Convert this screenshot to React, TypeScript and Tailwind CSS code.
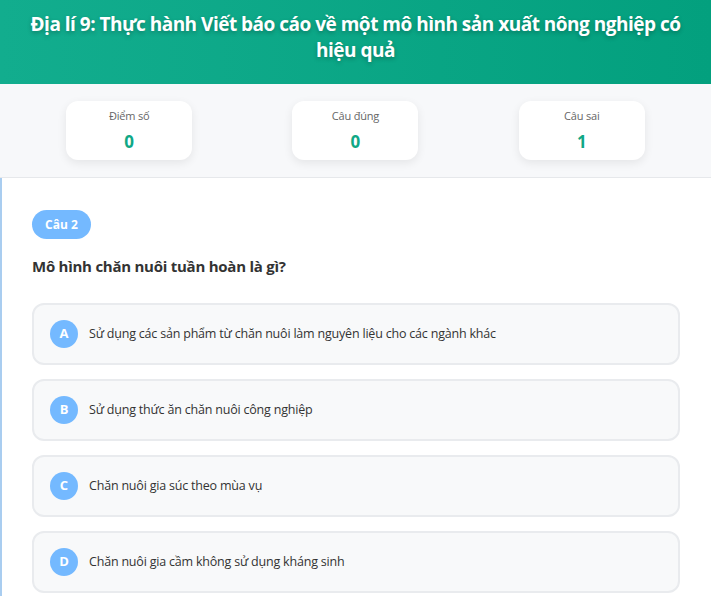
import React from "react";

const options = [
  { k: "A", t: "Sử dụng các sản phẩm từ chăn nuôi làm nguyên liệu cho các ngành khác" },
  { k: "B", t: "Sử dụng thức ăn chăn nuôi công nghiệp" },
  { k: "C", t: "Chăn nuôi gia súc theo mùa vụ" },
  { k: "D", t: "Chăn nuôi gia cầm không sử dụng kháng sinh" },
];

const stats = [
  { l: "Điểm số", v: "0" },
  { l: "Câu đúng", v: "0" },
  { l: "Câu sai", v: "1" },
];

export default function App() {
  return (
    <div
      className="w-[711px] h-[596px] overflow-hidden bg-white"
      style={{ fontFamily: '"Open Sans", "Noto Sans", sans-serif' }}
    >
      <div className="h-[84px] bg-gradient-to-r from-[#12ad8e] to-[#03a07e] pt-[11px] px-6 text-center">
        <h1
          className="text-white font-bold text-[19px] leading-[26px] tracking-[-0.5px]"
          style={{ textShadow: "0 2px 4px rgba(0,0,0,0.25)" }}
        >
          Địa lí 9: Thực hành Viết báo cáo về một mô hình sản xuất nông nghiệp có hiệu quả
        </h1>
      </div>
      <div className="h-[94px] bg-[#f7f8fa] border-b border-[#e6e8eb] grid grid-cols-3 px-4 pt-[17px]">
        {stats.map((s) => (
          <div key={s.l} className="flex justify-center">
            <div className="w-[126px] h-[59px] bg-white rounded-xl shadow-[0_3px_10px_rgba(0,0,0,0.08)] flex flex-col items-center pt-[7px]">
              <div className="text-[11px] leading-[16px] text-[#666] tracking-[-0.2px]">{s.l}</div>
              <div className="text-[17px] leading-[24px] font-bold text-[#10a886] mt-[6px]">{s.v}</div>
            </div>
          </div>
        ))}
      </div>
      <div className="border-l-2 border-[#a9cdf0] h-full pl-[30px] pr-[31px] pt-[32px]">
        <div className="inline-flex items-center h-[29px] px-[13px] rounded-full bg-[#74b9ff] text-white text-[12px] font-bold">
          Câu 2
        </div>
        <div className="mt-[16px] text-[15px] leading-[22px] font-bold text-[#333] tracking-[-0.25px]">
          Mô hình chăn nuôi tuần hoàn là gì?
        </div>
        <div className="mt-[26px] flex flex-col gap-[14px]">
          {options.map((o) => (
            <div
              key={o.k}
              className="h-[62px] rounded-xl border-2 border-[#e9ebee] bg-[#f8f9fa] flex items-center pl-[16px]"
            >
              <div className="w-[28px] h-[28px] rounded-full bg-[#74b9ff] text-white text-[13px] font-bold flex items-center justify-center shrink-0">
                {o.k}
              </div>
              <div className="ml-[11px] text-[12.5px] text-[#333] tracking-[-0.2px]">{o.t}</div>
            </div>
          ))}
        </div>
      </div>
    </div>
  );
}
